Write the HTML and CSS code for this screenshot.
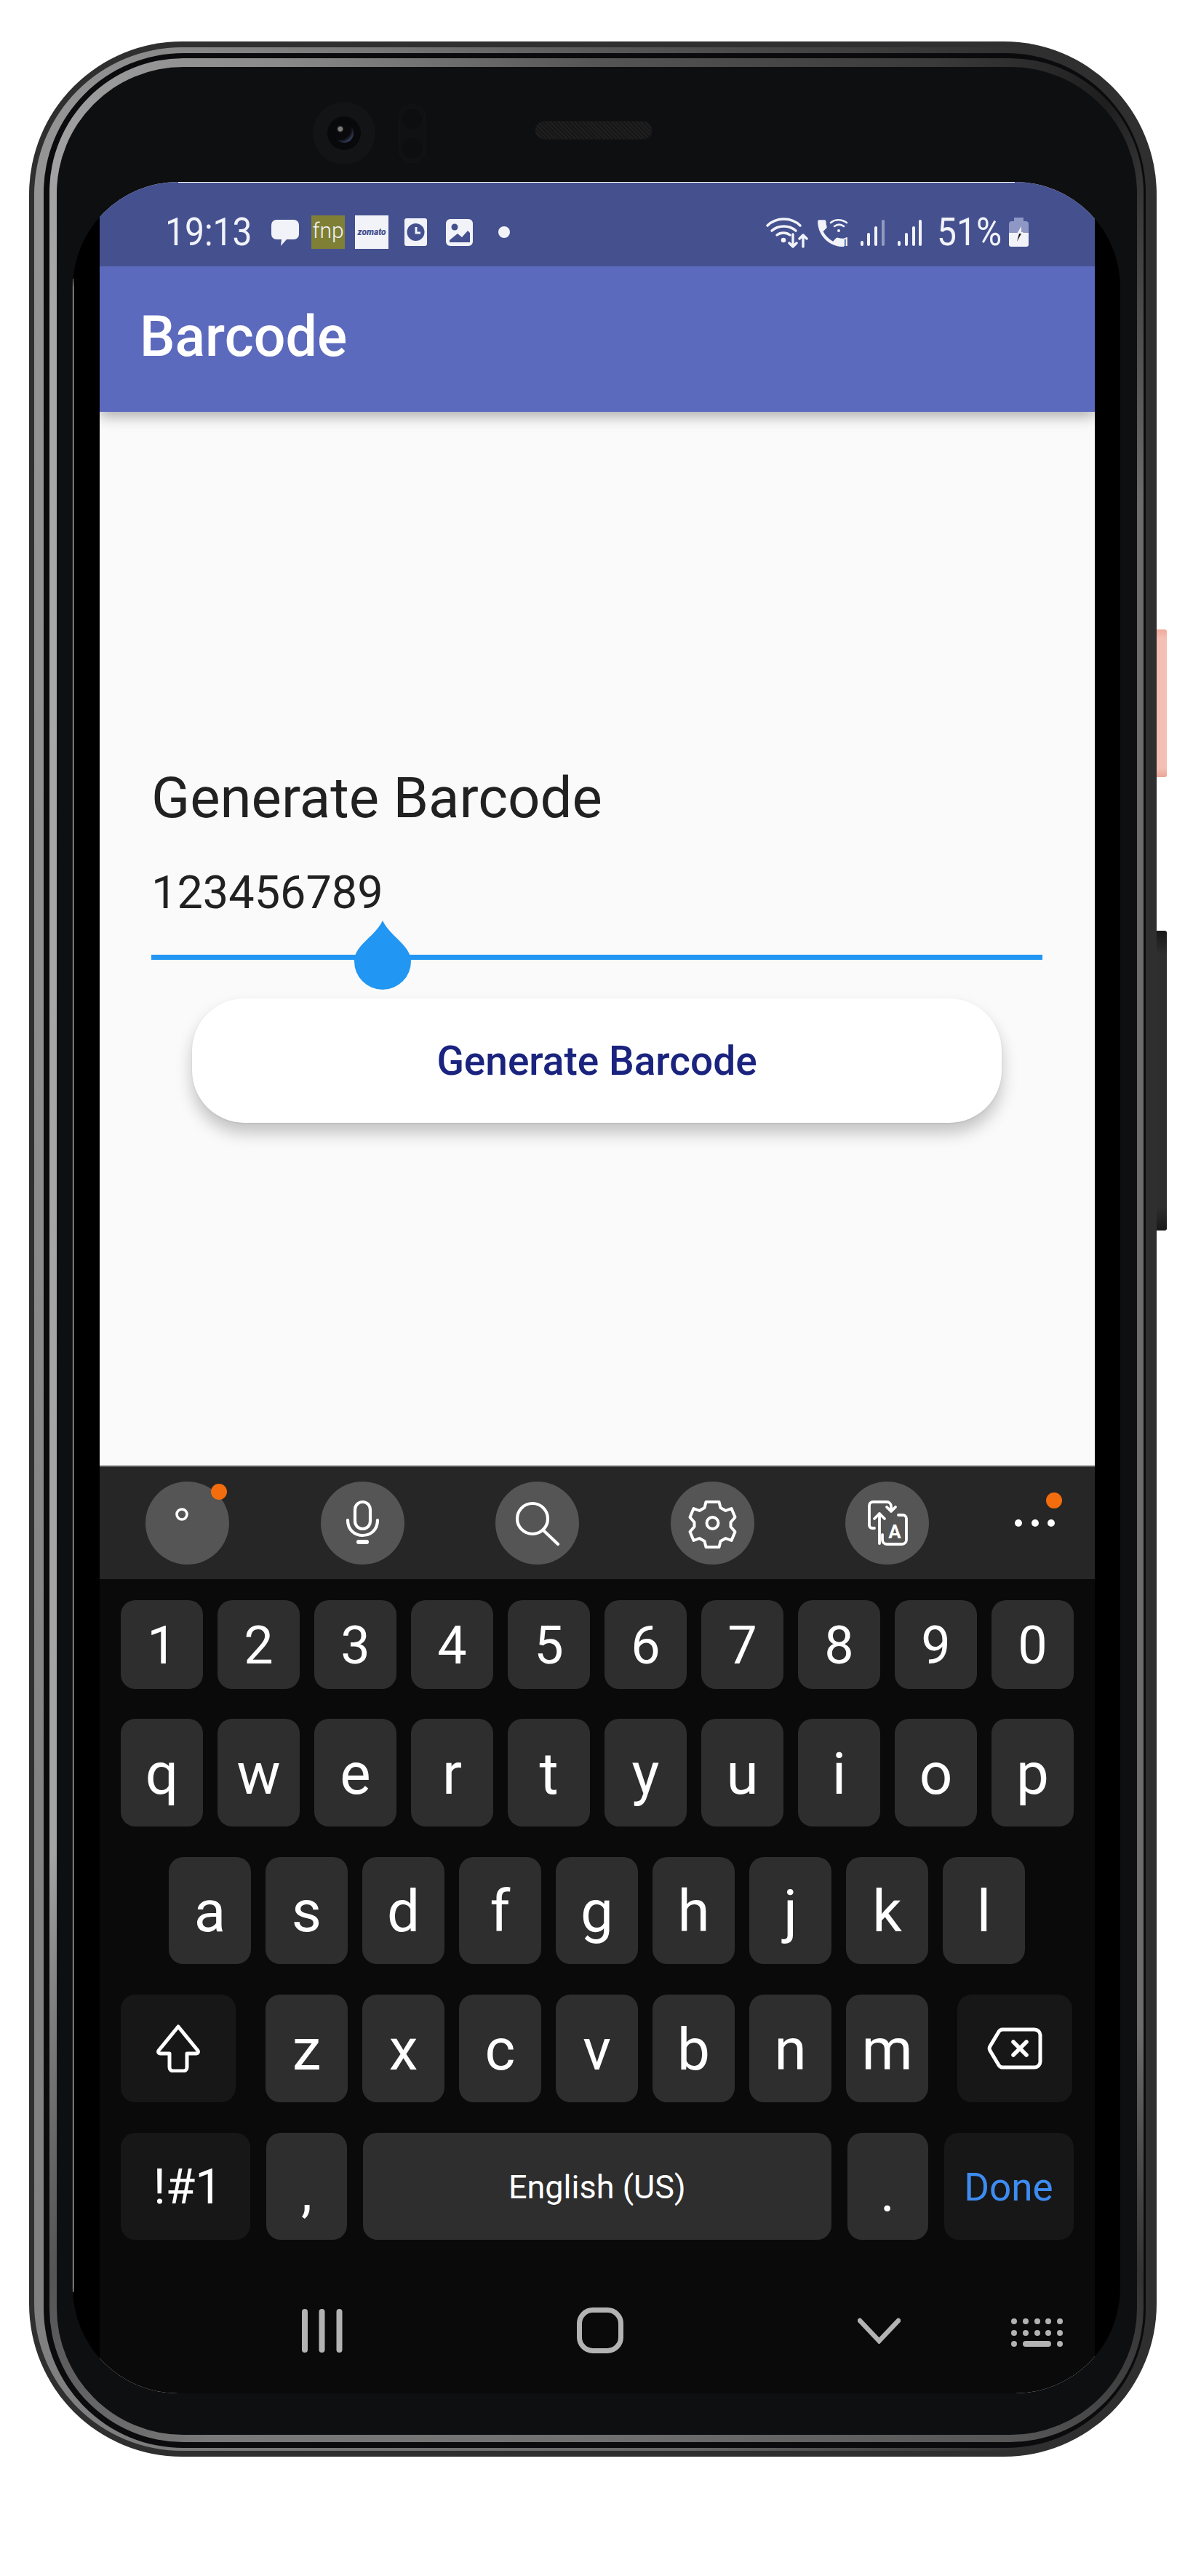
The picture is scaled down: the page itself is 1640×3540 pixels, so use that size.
FILE: index.html
```html
<!DOCTYPE html>
<html lang="en">
<head>
<meta charset="utf-8">
<title>Barcode</title>
<link rel="stylesheet" href="styles.css">
</head>
<body>
<div class="phone">
  <span class="side-btn side-pink"></span>
  <span class="side-btn side-dark"></span>
  <div class="rim-outer"><div class="rim-gap"><div class="rim-inner"><div class="bezel">
    <div class="sensors">
      <div class="camera"><div class="lens"><div class="lens-core"></div></div></div>
      <div class="ir"><span></span><span></span></div>
      <div class="speaker"></div>
    </div>
    <div class="glass">
      <span class="line-top"></span>
      <span class="line-left"></span>
      <div class="screen">
        <div class="status">
          <span class="time">19:13</span>
          <svg class="ic-msg" width="38" height="36" viewBox="0 0 38 36"><path fill="#f1f3f8" d="M7 0h24a7 7 0 0 1 7 7v13a7 7 0 0 1-7 7H21l-8 9 1-9H7a7 7 0 0 1-7-7V7a7 7 0 0 1 7-7z"/></svg>
          <span class="fnp">fnp</span>
          <span class="zomato">zomato</span>
          <svg class="ic-clock" width="31" height="38" viewBox="0 0 31 38"><rect width="31" height="38" rx="3" fill="#f1f3f8"/><circle cx="15.5" cy="19" r="12" fill="#45508f"/><path d="M16 12v8h6" fill="none" stroke="#f1f3f8" stroke-width="3"/></svg>
          <svg class="ic-img" width="37" height="37" viewBox="0 0 37 37"><rect width="37" height="37" rx="6" fill="#f1f3f8"/><circle cx="12" cy="11" r="4.5" fill="#45508f"/><path d="M5 32v-3l11-9 6 5 8-9 3 3v13z" fill="#45508f"/></svg>
          <span class="dot"></span>
          <span class="status-fill"></span>
          <svg class="ic-wifi" width="58" height="43" viewBox="0 0 58 43" fill="none" stroke="#f1f3f8" stroke-width="3.4" stroke-linecap="round" stroke-linejoin="round"><path d="M2 12C14 0 35 0 47 12"/><path d="M8 19c9-8 24-8 33 0"/><path d="M15 25c5-4 13-4 18 0"/><circle cx="24" cy="32" r="1.6" fill="#f1f3f8"/><path d="M37 24v17m-5-5 5 5 5-5"/><path d="M51 41V25m-5 5 5-5 5 5"/></svg>
          <span class="ic-call">
            <svg width="45" height="40" viewBox="0 0 45 40"><path fill="#f1f3f8" transform="translate(-5 -3) scale(2.05)" d="M6.62 10.79c1.44 2.83 3.76 5.14 6.59 6.59l2.2-2.2c.27-.27.67-.36 1.02-.24 1.12.37 2.33.57 3.57.57.55 0 1 .45 1 1V20c0 .55-.45 1-1 1-9.39 0-17-7.61-17-17 0-.55.45-1 1-1h3.5c.55 0 1 .45 1 1 0 1.25.2 2.45.57 3.57.11.35.03.74-.25 1.02l-2.2 2.2z"/><path fill="none" stroke="#f1f3f8" stroke-width="2.6" stroke-linecap="round" d="M19 7c6-5 15-5 22 0M24 12c4-3 9-3 13 0"/><circle cx="30" cy="18" r="2" fill="#f1f3f8"/></svg>
            <span class="sim">1</span>
          </span>
          <svg class="ic-sig1" width="34" height="36" viewBox="0 0 34 36" fill="#f1f3f8"><rect x="1" y="29" width="4" height="7" rx="2"/><rect x="10" y="18" width="4" height="18" rx="2"/><rect x="20" y="9" width="4" height="27" rx="2"/><rect x="30" y="0" width="4" height="36" rx="2" opacity=".45"/></svg>
          <svg class="ic-sig2" width="34" height="36" viewBox="0 0 34 36" fill="#f1f3f8"><rect x="0" y="29" width="4" height="7" rx="2"/><rect x="10" y="18" width="4" height="18" rx="2"/><rect x="20" y="9" width="4" height="27" rx="2"/><rect x="29" y="0" width="4" height="36" rx="2"/></svg>
          <span class="pct">51%</span>
          <svg class="ic-batt" width="27" height="40" viewBox="0 0 27 40"><path fill="#8f97c4" d="M7 0h13v5h3a4 4 0 0 1 4 4v12H0V9a4 4 0 0 1 4-4h3z"/><path fill="#f1f3f8" d="M0 21h27v16a3 3 0 0 1-3 3H3a3 3 0 0 1-3-3z"/><path fill="#f1f3f8" d="M11 22l6-10v8h3l-3 2z"/><path fill="#111" d="M14 22h3l-6 11z"/></svg>
        </div>
        <header class="appbar"><h1 class="appbar-title">Barcode</h1></header>
        <main class="content">
          <h2 class="heading">Generate Barcode</h2>
          <div class="field-value">123456789</div>
          <div class="track">
            <svg class="drop" width="78" height="95" viewBox="0 0 78 95"><path fill="#2196f3" d="M39 0C49 22 78 34 78 56A39 39 0 0 1 0 56C0 34 29 22 39 0Z"/></svg>
          </div>
          <button class="cta">Generate Barcode</button>
        </main>
        <section class="keyboard">
          <div class="toolbar">
            <div class="tool">
              <svg width="115" height="114" viewBox="0 0 115 114" fill="none" stroke="#fff" stroke-width="3.6"><circle cx="50" cy="45" r="7"/></svg>
              <span class="badge"></span>
            </div>
            <div class="tool">
              <svg width="115" height="114" viewBox="0 0 115 114" fill="none" stroke="#fff" stroke-width="4.2" stroke-linecap="round"><rect x="47" y="28" width="21" height="37" rx="10.5"/><path d="M37 53c0 28 41 28 41 0"/><path d="M52 83h11" stroke-width="6"/></svg>
            </div>
            <div class="tool">
              <svg width="115" height="114" viewBox="0 0 115 114" fill="none" stroke="#fff" stroke-width="4.2" stroke-linecap="round"><circle cx="51" cy="51" r="21"/><path d="M67 68l19 18"/></svg>
            </div>
            <div class="tool">
              <svg width="115" height="114" viewBox="-57.5 -57 115 114" fill="none" stroke="#fff" stroke-width="4" stroke-linejoin="round"><path d="M-9-29H9l2 8 7 4 8-3 5 12-6 7v6l6 7-5 12-8-3-7 4-2 8H-9l-2-8-7-4-8 3-5-12 6-7v-6l-6-7 5-12 8 3 7-4z"/><circle r="8"/></svg>
            </div>
            <div class="tool">
              <svg width="115" height="114" viewBox="0 0 115 114" fill="none" stroke="#fff" stroke-width="3.8" stroke-linecap="round" stroke-linejoin="round"><path d="M40 64h-3a4 4 0 0 1-4-4V33a5 5 0 0 1 5-5h19a6 6 0 0 1 6 6v6"/><path d="M57 35l6 6 6-6"/><path d="M47 85V44m-7 7 7-7 7 7"/><path d="M73 46h6a5 5 0 0 1 5 5v29a6 6 0 0 1-6 6H57a6 6 0 0 1-6-6v-7"/><text class="tr-a" x="68" y="78">A</text></svg>
            </div>
            <div class="tool-more">
              <svg width="62" height="14" viewBox="0 0 62 14" fill="#fff"><circle cx="10" cy="7" r="5"/><circle cx="33" cy="7" r="5"/><circle cx="55" cy="7" r="5"/></svg>
              <span class="badge badge-more"></span>
            </div>
          </div>
          <div class="keys">
            <div class="row row-num">
              <span class="key">1</span><span class="key">2</span><span class="key">3</span><span class="key">4</span><span class="key">5</span><span class="key">6</span><span class="key">7</span><span class="key">8</span><span class="key">9</span><span class="key">0</span>
            </div>
            <div class="row">
              <span class="key alpha">q</span><span class="key alpha">w</span><span class="key alpha">e</span><span class="key alpha">r</span><span class="key alpha">t</span><span class="key alpha">y</span><span class="key alpha">u</span><span class="key alpha">i</span><span class="key alpha">o</span><span class="key alpha">p</span>
            </div>
            <div class="row row-center">
              <span class="key alpha">a</span><span class="key alpha">s</span><span class="key alpha">d</span><span class="key alpha">f</span><span class="key alpha">g</span><span class="key alpha">h</span><span class="key alpha">j</span><span class="key alpha">k</span><span class="key alpha">l</span>
            </div>
            <div class="row">
              <span class="key mod mod-shift">
                <svg width="62" height="66" viewBox="0 0 62 66" fill="none" stroke="#fff" stroke-width="5" stroke-linejoin="round"><path d="M31 3L58 36c1 2 0 4-2 4H43v19a5 5 0 0 1-5 5H24a5 5 0 0 1-5-5V40H6c-2 0-3-2-2-4z"/></svg>
              </span>
              <span class="key alpha key-z">z</span><span class="key alpha">x</span><span class="key alpha">c</span><span class="key alpha">v</span><span class="key alpha">b</span><span class="key alpha">n</span><span class="key alpha">m</span>
              <span class="key mod mod-back">
                <svg width="76" height="58" viewBox="0 0 76 58" fill="none" stroke="#fff" stroke-width="5" stroke-linejoin="round" stroke-linecap="round"><path d="M21 3h44a8 8 0 0 1 8 8v36a8 8 0 0 1-8 8H21a6 6 0 0 1-5-3L4 32a6 6 0 0 1 0-6L16 6a6 6 0 0 1 5-3z"/><path d="M36 20l18 18M54 20L36 38" stroke-width="5.5"/></svg>
              </span>
            </div>
            <div class="row row-bottom">
              <span class="key mod sym">!#1</span>
              <span class="key punct narrow">,</span>
              <span class="key space">English (US)</span>
              <span class="key punct narrow">.</span>
              <span class="key mod done">Done</span>
            </div>
          </div>
          <nav class="navbar">
            <svg width="56" height="60" viewBox="0 0 56 60" fill="#b3b3b3"><rect width="8" height="60" rx="4"/><rect x="23.5" width="8" height="60" rx="4"/><rect x="47.5" width="8" height="60" rx="4"/></svg>
            <span class="nav-home"></span>
            <svg class="nav-chev" width="59" height="36" viewBox="0 0 59 36" fill="none" stroke="#b3b3b3" stroke-width="6.5" stroke-linecap="round" stroke-linejoin="miter"><path d="M3 4l26.5 28L56 4"/></svg>
            <svg class="nav-kbd" width="71" height="40" viewBox="0 0 71 40" fill="#b3b3b3"><circle cx="4" cy="4" r="4"/><circle cx="20" cy="4" r="4"/><circle cx="36" cy="4" r="4"/><circle cx="51" cy="4" r="4"/><circle cx="67" cy="4" r="4"/><circle cx="4" cy="20" r="4"/><circle cx="20" cy="20" r="4"/><circle cx="36" cy="20" r="4"/><circle cx="51" cy="20" r="4"/><circle cx="67" cy="20" r="4"/><circle cx="4" cy="35" r="4"/><rect x="16" y="31" width="39" height="8" rx="4"/><circle cx="67" cy="35" r="4"/></svg>
          </nav>
        </section>
      </div>
    </div>
  </div></div></div></div>
</div>
</body>
</html>
```

FILE: styles.css
```css
* { box-sizing: border-box; }
html, body { margin: 0; padding: 0; background: #fff; }
body { width: 1640px; height: 3540px; font-family: Roboto, "Noto Sans", sans-serif; overflow: hidden; }

/* device shell: concentric rims */
.phone {
  position: relative;
  width: 1550px;
  height: 3319px;
  margin: 57px 0 0 40px;
  padding: 8px 15px 8px 7px;
  border-radius: 210px;
  background: #2f2f2f;
}
.side-btn { position: absolute; left: 100%; width: 14px; border-radius: 0 3px 3px 0; }
.side-pink { top: 808px; height: 203px; background: linear-gradient(#eeaa9c, #f5bfb3 6%, #f5bfb3 94%, #e9a596); }
.side-dark { top: 1222px; height: 412px; background: linear-gradient(#191919, #2e2e2e 8%, #2e2e2e 92%, #191919); }

.rim-outer {
  height: 100%;
  padding: 8px 0 4px 13px;
  border-radius: 203px;
  background: conic-gradient(#5a5a5a 0deg, #444 10deg, #2f2f2f 20deg, #2f2f2f 160deg, #666 175deg, #808080 205deg, #8a8a8a 270deg, #949494 335deg, #777 350deg, #5a5a5a 360deg);
}
.rim-gap {
  height: 100%;
  padding: 7px 3px 8px 8px;
  border-radius: 192px;
  background: #0b0b0d;
}
.rim-inner {
  height: 100%;
  padding: 12px 9px 10px 10px;
  border-radius: 184px;
  background: conic-gradient(#555 0deg, #3a3a3a 16deg, #1e1e1e 24deg, #4a4a4a 30deg, #6c6c6c 36deg, #6c6c6c 145deg, #333 152deg, #555 160deg, #707070 180deg, #7a7a7a 198deg, #555 208deg, #a4a4a4 222deg, #a8a8a8 330deg, #8a8a8a 345deg, #555 360deg);
}
.bezel {
  height: 100%;
  padding: 0 23px 57px 22px;
  border-radius: 174px;
  background: #0e0f11;
  display: flex;
  flex-direction: column;
}

/* top sensors */
.sensors { height: 158px; display: flex; align-items: flex-start; padding-left: 330px; flex: none; }
.camera {
  width: 86px; height: 86px; margin-top: 48px; border-radius: 50%;
  background: #131416;
  display: flex; align-items: center; justify-content: center;
}
.lens {
  width: 46px; height: 46px; border-radius: 50%;
  background: #08090b;
  display: flex; align-items: center; justify-content: center;
}
.lens-core {
  width: 26px; height: 26px; border-radius: 50%;
  background: radial-gradient(circle at 30% 28%, #7c7c7c 0 10%, #0a0a0c 18%, #0a0a0c 55%, #3a4468 80%);
}
.ir {
  width: 37px; height: 81px; margin-top: 51px; margin-left: 32px;
  border-radius: 19px; border: 1px solid #141517;
  background: #101113;
  display: flex; flex-direction: column; justify-content: space-around; align-items: center;
}
.ir span { width: 27px; height: 27px; border-radius: 50%; background: #0d0e10; }
.speaker {
  width: 162px; height: 26px; margin-top: 74px; margin-left: 150px;
  border-radius: 13px; border: 1px solid #141517;
  background: repeating-linear-gradient(45deg, #161617 0 2px, #1f1f20 2px 4px);
}

/* screen glass */
.glass {
  position: relative;
  flex: 1;
  padding: 0 35px 0 37px;
  border-radius: 145px;
  background: #000;
  overflow: hidden;
}
.screen {
  height: 100%;
  background: #fafafa;
  display: flex;
  flex-direction: column;
}
.line-top { position: absolute; z-index: 3; top: 0; left: 145px; width: 1150px; height: 1px; background: #fff; }
.line-left { position: absolute; z-index: 3; left: 0; top: 133px; width: 1px; height: 2767px; background: #fff; }

/* status bar */
.status {
  height: 116px;
  flex: none;
  background: #45508f;
  color: #f1f3f8;
  display: flex;
  align-items: center;
  padding: 22px 91px 0 90px;
  position: relative;
  z-index: 2;
}
.status > * { flex: none; }
.status-fill { flex: 1; }
.time { font-size: 48px; line-height: 1; width: 123px; transform: scaleY(1.1); }
.ic-msg { margin-left: 23px; margin-top: 1px; }
.fnp {
  margin-left: 17px; width: 46px; height: 46px; background: #7f7f36;
  font-size: 30px; line-height: 42px; text-align: center; color: #f1f3f8; font-weight: 300;
}
.zomato {
  margin-left: 14px; width: 46px; height: 46px; background: #f1f3f8;
  font-size: 12px; line-height: 46px; text-align: center; color: #45508f; font-weight: 900; font-style: italic;
}
.ic-clock { margin-left: 22px; }
.ic-img { margin-left: 26px; }
.dot { margin-left: 35px; width: 16px; height: 16px; border-radius: 50%; background: #f1f3f8; }
.ic-call { margin-left: 12px; position: relative; width: 45px; height: 40px; }
.ic-call svg { display: block; }
.sim { position: absolute; right: 0; bottom: -3px; font-size: 17px; line-height: 20px; font-weight: 500; }
.ic-sig1 { margin-left: 14px; margin-top: 2px; }
.ic-sig2 { margin-left: 18px; margin-top: 2px; }
.pct { margin-left: 20px; font-size: 48px; line-height: 1; width: 90px; white-space: nowrap; transform: scaleY(1.1); }
.ic-batt { margin-left: 9px; }

/* app bar */
.appbar {
  height: 200px;
  flex: none;
  background: #5c6abd;
  box-shadow: 0 6px 18px rgba(0,0,0,.32);
  display: flex;
  align-items: center;
  padding: 0 0 6px 55px;
  position: relative;
  z-index: 1;
}
.appbar-title { margin: 0; color: #fff; font-size: 77px; font-weight: 500; line-height: 1; }

/* content */
.content {
  flex: 1;
  min-height: 0;
  padding: 486px 72px 0 71px;
  display: flex;
  flex-direction: column;
  background: #fafafa;
}
.heading { margin: 0; font-size: 78px; line-height: 90px; font-weight: 400; color: #212121; }
.field-value { margin-top: 49px; font-size: 63px; line-height: 72px; color: #212121; }
.track { position: relative; flex: none; height: 7px; margin-top: 49px; background: #2196f3; }
.drop { position: absolute; left: 279px; top: -47px; display: block; }
.cta {
  align-self: stretch;
  margin: 53px 56px 0;
  height: 171px;
  border: 0;
  border-radius: 72px;
  background: #fff;
  color: #1a237e;
  font-family: inherit;
  font-size: 55px;
  font-weight: 500;
  box-shadow: 0 14px 22px rgba(0,0,0,.22), 0 1px 3px rgba(0,0,0,.08);
}

/* keyboard */
.keyboard { flex: none; height: 1275px; background: #0a0a0a; }
.toolbar {
  height: 156px;
  background: #262626;
  border-top: 2px solid #5a5a5a;
  display: flex;
  align-items: center;
  padding-left: 63px;
  gap: 125.5px;
}
.tool { position: relative; width: 115px; height: 114px; border-radius: 50%; background: #555; flex: none; }
.tool svg { display: block; }
.tr-a { font-family: Roboto, sans-serif; font-size: 26px; font-weight: 700; fill: #fff; stroke: none; text-anchor: middle; }
.tool-more { position: relative; width: 62px; height: 14px; margin-left: -13px; flex: none; }
.tool-more svg { display: block; }
.badge { position: absolute; width: 22px; height: 22px; border-radius: 50%; background: #f36c0d; left: 90px; top: 3px; }
.badge-more { left: 48px; top: -35px; }

.keys { padding: 29px 30px 0 29px; display: flex; flex-direction: column; gap: 42px; }
.row { display: flex; gap: 20px; height: 147.5px; }
.row-num { height: 122px; margin-bottom: -1px; }
.row-center { justify-content: center; }
.key {
  width: 113px;
  flex: none;
  border-radius: 20px;
  background: #2e2e2e;
  color: #fff;
  font-size: 72px;
  line-height: 1;
  padding-top: 4px;
  display: flex;
  align-items: center;
  justify-content: center;
}
.alpha { font-size: 80px; }
.mod { background: #171717; padding-top: 0; }
.mod-shift { width: 158px; margin-right: 21px; }
.mod-back { width: 158px; margin-left: 20px; }
.row-bottom { gap: 22px; }
.sym { width: 178px; font-size: 66px; padding: 4px 0 0 6px; }
.done { width: 178px; font-size: 53px; padding-top: 4px; color: #3d8cf2; }
.space { width: 643.5px; font-size: 45px; padding-top: 2px; }
.narrow { width: 111px; }
.punct { font-size: 76px; align-items: flex-end; padding-bottom: 28px; }

/* nav */
.navbar { display: flex; align-items: center; height: 63px; margin-top: 93px; padding-left: 278px; }
.navbar > * { flex: none; }
.nav-home { width: 64px; height: 63px; margin-left: 322px; border: 7px solid #b3b3b3; border-radius: 22px; }
.nav-chev { margin-left: 322px; }
.nav-kbd { margin-left: 152px; margin-top: 7px; }
```
